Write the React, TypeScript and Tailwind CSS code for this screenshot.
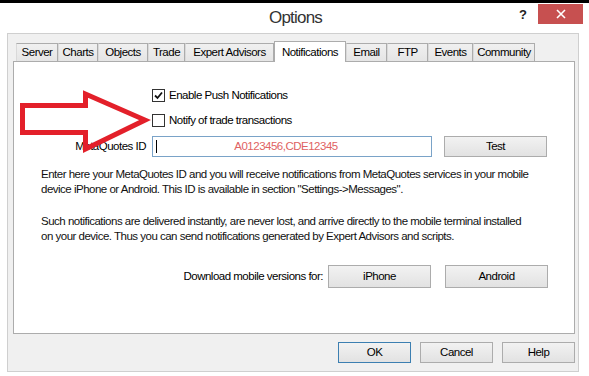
import React from "react";

const tabs: { label: string; w: number }[] = [
  { label: "Server", w: 42 },
  { label: "Charts", w: 40 },
  { label: "Objects", w: 50 },
  { label: "Trade", w: 37 },
  { label: "Expert Advisors", w: 89 },
  { label: "Notifications", w: 72 },
  { label: "Email", w: 41 },
  { label: "FTP", w: 41 },
  { label: "Events", w: 45 },
  { label: "Community", w: 62 },
];

function Btn({ children, w, focused }: { children: React.ReactNode; w: string; focused?: boolean }) {
  return (
    <div
      className={`${w} flex items-center justify-center border ${
        focused ? "border-[#3c7fb1]" : "border-[#acacac]"
      } bg-gradient-to-b from-[#f2f2f2] to-[#e2e2e2] text-black`}
    >
      {children}
    </div>
  );
}

function Check({ checked }: { checked?: boolean }) {
  return (
    <div className="w-[13px] h-[13px] border border-[#333] bg-white flex items-center justify-center">
      {checked && (
        <svg width="9" height="9" viewBox="0 0 9 9">
          <path d="M1 4.5 L3.5 7 L8 1.5" fill="none" stroke="#111" strokeWidth="1.8" />
        </svg>
      )}
    </div>
  );
}

export default function App() {
  return (
    <div
      className="w-[589px] h-[376px] bg-white relative overflow-hidden text-black text-[11.5px] tracking-[-0.5px]"
      style={{ fontFamily: '"Liberation Sans", Arial, sans-serif' }}
    >
      <div className="h-[3px] bg-black" />
      {/* title bar */}
      <div className="h-[30px] relative flex items-center justify-center">
        <span className="text-[17px] tracking-[-0.8px] text-[#333] ml-[2px]">Options</span>
        <span className="absolute left-[519px] top-[2px] text-[13px] font-bold text-[#222] tracking-normal">?</span>
        <div className="absolute left-[538px] top-[1px] w-[45px] h-[20px] bg-[#c75050] flex items-center justify-center">
          <svg width="10" height="10" viewBox="0 0 10 10">
            <path d="M1 1 L9 9 M9 1 L1 9" stroke="#fff" strokeWidth="1.6" />
          </svg>
        </div>
      </div>
      {/* client area */}
      <div className="ml-[7px] w-[572px] h-[339px] border border-[#cfcfcf] bg-[#f0f0f0] pl-[5px] pr-[3px] pt-[7px]">
        <div className="flex items-end h-[20px] pl-[3px]">
          {tabs.map((t) => {
            const sel = t.label === "Notifications";
            return (
              <div
                key={t.label}
                style={{ width: t.w }}
                className={
                  sel
                    ? "h-[21px] mb-[-1px] relative z-10 bg-white border border-[#acacac] border-b-0 flex items-start justify-center pt-[2px]"
                    : "h-[18px] bg-gradient-to-b from-[#f0f0f0] to-[#e5e5e5] border border-[#acacac] border-b-0 border-l-[#d9d9d9] flex items-center justify-center"
                }
              >
                {t.label}
              </div>
            );
          })}
        </div>
        {/* panel */}
        <div className="w-[562px] h-[273px] bg-white border border-[#acacac] relative">
          <div className="pl-[138px] pt-[27px] flex flex-col gap-[12px]">
            <div className="flex items-center gap-[4px] h-[13px]">
              <Check checked />
              <span>Enable Push Notifications</span>
            </div>
            <div className="flex items-center gap-[4px] h-[13px]">
              <Check />
              <span>Notify of trade transactions</span>
            </div>
          </div>
          <div className="flex items-center mt-[9px] h-[21px]">
            <div className="w-[132px] text-right">MetaQuotes ID</div>
            <div className="ml-[6px] w-[280px] h-[21px] border border-[#7aa3c8] bg-white relative flex items-center justify-center">
              <div className="absolute left-[3px] top-[3px] w-px h-[13px] bg-black" />
              <span className="text-[#e06262] ml-[-12px]">A0123456,CDE12345</span>
            </div>
            <div className="ml-[12px]">
              <Btn w="w-[103px] h-[21px]">Test</Btn>
            </div>
          </div>
          <div className="pl-[27px] pr-[10px] mt-[10px] leading-[15px] text-[#111]">
            <p>
              Enter here your MetaQuotes ID and you will receive notifications from MetaQuotes services in your mobile
              <br />
              device iPhone or Android. This ID is available in section "Settings-&gt;Messages".
            </p>
            <p className="mt-[17px]">
              Such notifications are delivered instantly, are never lost, and arrive directly to the mobile terminal installed
              <br />
              on your device. Thus you can send notifications generated by Expert Advisors and scripts.
            </p>
          </div>
          <div className="flex items-center mt-[21px] h-[23px]">
            <div className="w-[309px] text-right">Download mobile versions for:</div>
            <div className="ml-[5px]">
              <Btn w="w-[103px] h-[23px]">iPhone</Btn>
            </div>
            <div className="ml-[14px]">
              <Btn w="w-[103px] h-[23px]">Android</Btn>
            </div>
          </div>
        </div>
        {/* bottom buttons */}
        <div className="flex justify-end gap-[9px] mt-[8px] w-[562px]">
          <Btn w="w-[73px] h-[21px]" focused>
            OK
          </Btn>
          <Btn w="w-[73px] h-[21px]">Cancel</Btn>
          <Btn w="w-[73px] h-[21px]">Help</Btn>
        </div>
      </div>
      {/* red arrow annotation */}
      <svg className="absolute left-0 top-0 pointer-events-none" width="589" height="376">
        <path
          d="M22.5 105.5 L85.5 105.5 L85.5 94 L145 120 L85.5 149 L85.5 132.5 L22.5 132.5 Z"
          fill="none"
          stroke="#e3202a"
          strokeWidth="5"
          strokeLinejoin="miter"
        />
      </svg>
    </div>
  );
}
